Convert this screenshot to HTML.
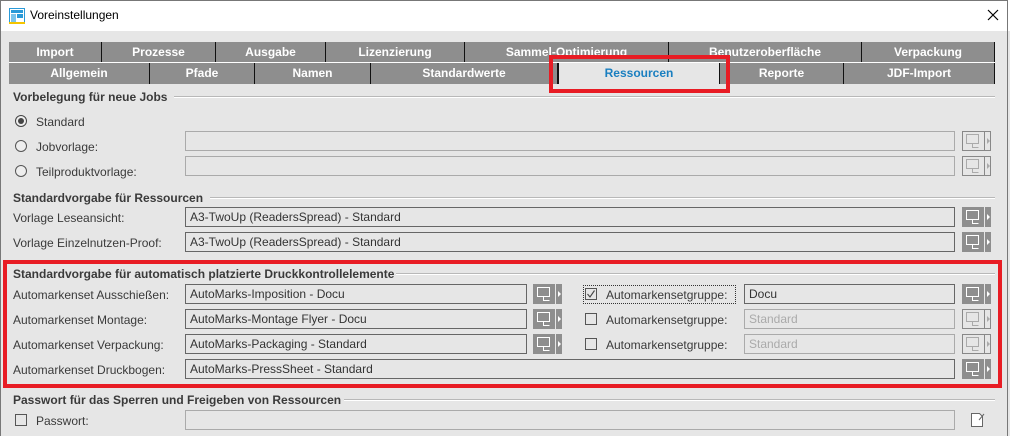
<!DOCTYPE html>
<html><head><meta charset="utf-8"><style>
body{margin:0;width:1010px;height:436px;overflow:hidden;background:#e6e6e6;font-family:"Liberation Sans",sans-serif;font-size:12px;color:#3a3a3a;position:relative}
.a{position:absolute;white-space:nowrap}
.title{left:0;top:0;width:1010px;height:31px;background:#fff}
.frame{left:0;top:0;width:1008px;height:436px;border-left:1px solid #777;border-right:1px solid #777;border-top:1px solid #777;box-sizing:border-box;pointer-events:none}
.tab{position:absolute;background:#8e8e8e;color:#fff;font-weight:bold;font-size:12px;text-align:center;line-height:20px;border-right:1px solid #111;box-sizing:border-box}
.h{font-weight:bold;color:#3a3a3a;font-size:12px}
.line{height:1px;background:#b8b8b8;border-bottom:1px solid #fff}
.f{position:absolute;height:20px;border:1px solid #666;box-sizing:border-box;background:#e6e6e6;line-height:18px;padding-left:4px;color:#333}
.fd{border-color:#aaa;color:#aaa}
.lbl{color:#3a3a3a}
.rad{position:absolute;width:12px;height:12px;border:1px solid #555;border-radius:50%;box-sizing:border-box;background:#eee}
.chk{position:absolute;width:12px;height:12px;border:1px solid #555;box-sizing:border-box}
.red{position:absolute;border:4px solid #e81c24;box-sizing:border-box}
</style></head><body>
<div class="a title"></div>
<svg class="a" style="left:9px;top:8px" width="16" height="16" viewBox="0 0 16 16"><rect x="0.5" y="0.5" width="15" height="15" fill="#fff" stroke="#2a9ad8"/><rect x="2" y="2" width="12" height="3" fill="#2a9ad8"/><rect x="2" y="6" width="5" height="8" fill="#7cc4ea"/><rect x="8" y="6" width="6" height="4" fill="#2a9ad8"/><rect x="0" y="14" width="16" height="2" fill="#f4c400"/></svg>
<div class="a" style="left:30px;top:8px;font-size:12px;color:#000">Voreinstellungen</div>
<svg class="a" style="left:987px;top:9px" width="12" height="12"><path d="M1 1L11 11M11 1L1 11" stroke="#000" stroke-width="1.2"/></svg>

<div class="tab" style="left:9px;top:42px;width:93px;height:20px">Import</div>
<div class="tab" style="left:102px;top:42px;width:114px;height:20px">Prozesse</div>
<div class="tab" style="left:216px;top:42px;width:110px;height:20px">Ausgabe</div>
<div class="tab" style="left:326px;top:42px;width:139px;height:20px">Lizenzierung</div>
<div class="tab" style="left:465px;top:42px;width:204px;height:20px">Sammel-Optimierung</div>
<div class="tab" style="left:669px;top:42px;width:193px;height:20px">Benutzeroberfläche</div>
<div class="tab" style="left:862px;top:42px;width:133px;height:20px">Verpackung</div>
<div class="a" style="left:9px;top:62px;width:986px;height:1px;background:#fff"></div>
<div class="tab" style="left:9px;top:63px;width:141px;height:21px">Allgemein</div>
<div class="tab" style="left:150px;top:63px;width:105px;height:21px">Pfade</div>
<div class="tab" style="left:255px;top:63px;width:116px;height:21px">Namen</div>
<div class="tab" style="left:371px;top:63px;width:187px;height:21px">Standardwerte</div>
<div class="tab" style="left:558px;top:63px;width:162px;height:21px;background:#e6e6e6;color:#1a7fc0;border-left:1px solid #111">Ressourcen</div>
<div class="tab" style="left:720px;top:63px;width:124px;height:21px">Reporte</div>
<div class="tab" style="left:844px;top:63px;width:151px;height:21px">JDF-Import</div>
<div class="red" style="left:549px;top:55px;width:181px;height:38px"></div>

<div class="a h" style="left:13px;top:90px">Vorbelegung für neue Jobs</div>
<div class="a line" style="left:174px;top:96px;width:821px"></div>
<div class="rad" style="left:15px;top:115px;border-color:#444"><div style="position:absolute;left:2px;top:2px;width:6px;height:6px;border-radius:50%;background:#444"></div></div>
<div class="a lbl" style="left:36px;top:115px">Standard</div>
<div class="rad" style="left:15px;top:140px"></div>
<div class="a lbl" style="left:36px;top:140px">Jobvorlage:</div>
<div class="f fd" style="left:185px;top:131px;width:770px"></div>
<div class="rad" style="left:15px;top:165px"></div>
<div class="a lbl" style="left:36px;top:165px">Teilproduktvorlage:</div>
<div class="f fd" style="left:185px;top:156px;width:770px"></div>

<div class="a h" style="left:13px;top:191px">Standardvorgabe für Ressourcen</div>
<div class="a line" style="left:210px;top:197px;width:785px"></div>
<div class="a lbl" style="left:13px;top:211px">Vorlage Leseansicht:</div>
<div class="f" style="left:185px;top:207px;width:770px">A3-TwoUp (ReadersSpread) - Standard</div>
<div class="a lbl" style="left:13px;top:236px">Vorlage Einzelnutzen-Proof:</div>
<div class="f" style="left:185px;top:232px;width:770px">A3-TwoUp (ReadersSpread) - Standard</div>

<div class="red" style="left:3px;top:260px;width:999px;height:128px"></div>
<div class="a h" style="left:13px;top:267px">Standardvorgabe für automatisch platzierte Druckkontrollelemente</div>
<div class="a line" style="left:396px;top:273px;width:599px"></div>
<div class="a lbl" style="left:13px;top:288px">Automarkenset Ausschießen:</div>
<div class="f" style="left:185px;top:284px;width:342px">AutoMarks-Imposition - Docu</div>
<div class="a lbl" style="left:13px;top:313px">Automarkenset Montage:</div>
<div class="f" style="left:185px;top:309px;width:342px">AutoMarks-Montage Flyer - Docu</div>
<div class="a lbl" style="left:13px;top:338px">Automarkenset Verpackung:</div>
<div class="f" style="left:185px;top:334px;width:342px">AutoMarks-Packaging - Standard</div>
<div class="a lbl" style="left:13px;top:363px">Automarkenset Druckbogen:</div>
<div class="f" style="left:185px;top:359px;width:770px">AutoMarks-PressSheet - Standard</div>

<div class="a" style="left:583px;top:285px;width:151px;height:17px;border:1px dotted #333"></div>
<div class="chk" style="left:585px;top:288px"></div>
<svg class="a" style="left:585px;top:288px" width="12" height="12"><path d="M2.5 6l2.5 3 4.5-6.5" stroke="#444" fill="none" stroke-width="1.1"/></svg>
<div class="a lbl" style="left:606px;top:288px">Automarkensetgruppe:</div>
<div class="f" style="left:744px;top:284px;width:211px">Docu</div>
<div class="chk" style="left:585px;top:313px"></div>
<div class="a lbl" style="left:606px;top:313px">Automarkensetgruppe:</div>
<div class="f fd" style="left:744px;top:309px;width:211px">Standard</div>
<div class="chk" style="left:585px;top:338px"></div>
<div class="a lbl" style="left:606px;top:338px">Automarkensetgruppe:</div>
<div class="f fd" style="left:744px;top:334px;width:211px">Standard</div>

<div class="a h" style="left:13px;top:393px">Passwort für das Sperren und Freigeben von Ressourcen</div>
<div class="a line" style="left:344px;top:399px;width:651px"></div>
<div class="chk" style="left:15px;top:414px"></div>
<div class="a lbl" style="left:36px;top:414px">Passwort:</div>
<div class="f fd" style="left:185px;top:410px;width:770px"></div>
<svg class="a" style="left:970px;top:412px" width="16" height="16" viewBox="0 0 16 16"><path d="M1.5 1.5h8l3 3v10h-11z" fill="#fff" stroke="#666"/><path d="M9 8l5-6" stroke="#666" fill="none"/></svg>

<svg width="0" height="0" style="position:absolute"><defs>
<g id="bi"><rect x="0" y="0" width="22" height="20" fill="#8e8e8e"/><rect x="23" y="0" width="6" height="20" fill="#8e8e8e"/><rect x="4.5" y="3.5" width="12" height="9" fill="none" stroke="#fff"/><path d="M10.5 12.5v4h6" stroke="#fff" fill="none"/><path d="M25 7l3 3-3 3z" fill="#fff"/></g>
<g id="bd"><rect x="0.5" y="0.5" width="28" height="19" fill="#e6e6e6" stroke="#888"/><path d="M22.5 0v20" stroke="#888"/><rect x="4.5" y="3.5" width="12" height="9" fill="none" stroke="#aaa"/><path d="M10.5 12.5v4h6" stroke="#aaa" fill="none"/><path d="M25 7l3 3-3 3z" fill="#aaa"/></g>
</defs></svg>
<svg class="a" style="left:962px;top:131px" width="30" height="20"><use href="#bd"/></svg>
<svg class="a" style="left:962px;top:156px" width="30" height="20"><use href="#bd"/></svg>
<svg class="a" style="left:962px;top:207px" width="30" height="20"><use href="#bi"/></svg>
<svg class="a" style="left:962px;top:232px" width="30" height="20"><use href="#bi"/></svg>
<svg class="a" style="left:533px;top:284px" width="30" height="20"><use href="#bi"/></svg>
<svg class="a" style="left:533px;top:309px" width="30" height="20"><use href="#bi"/></svg>
<svg class="a" style="left:533px;top:334px" width="30" height="20"><use href="#bi"/></svg>
<svg class="a" style="left:962px;top:284px" width="30" height="20"><use href="#bi"/></svg>
<svg class="a" style="left:962px;top:309px" width="30" height="20"><use href="#bd"/></svg>
<svg class="a" style="left:962px;top:334px" width="30" height="20"><use href="#bd"/></svg>
<svg class="a" style="left:962px;top:359px" width="30" height="20"><use href="#bi"/></svg>
<div class="a frame"></div>
</body></html>
